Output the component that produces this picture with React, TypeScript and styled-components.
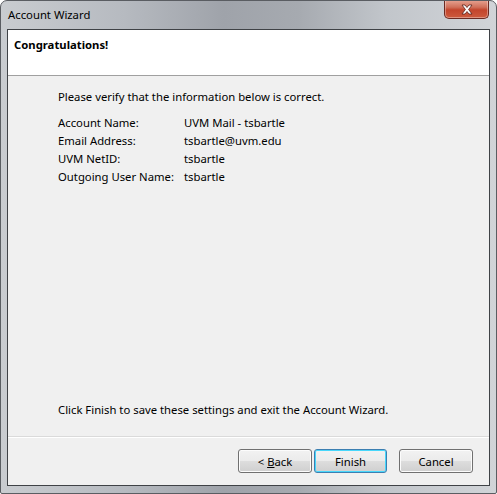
import React from 'react';
import styled, { createGlobalStyle } from 'styled-components';

const GlobalStyle = createGlobalStyle`
  html, body {
    margin: 0;
    padding: 0;
    background: #ffffff;
  }
  body {
    font-family: "Noto Sans", "DejaVu Sans", sans-serif;
  }
`;

const Window = styled.div`
  width: 497px;
  height: 494px;
  box-sizing: border-box;
  display: flex;
  flex-direction: column;
  border: 1px solid #5a5d62;
  border-radius: 7px 7px 2px 2px;
  background: linear-gradient(90deg, #c9ccd0 0%, #b6bac0 25%, #9fa3aa 45%, #a6aab0 60%, #c2c6cb 78%, #d1d4d8 100%);
  overflow: hidden;
`;

const TitleBar = styled.div`
  height: 28px;
  display: flex;
  justify-content: space-between;
  align-items: flex-start;
  padding-left: 7px;
`;

const Title = styled.span`
  font-size: 11.3px;
  color: #000;
  margin-top: 6px;
`;

const CloseButton = styled.div`
  width: 45px;
  height: 19px;
  margin-right: 7px;
  margin-top: -1px;
  box-sizing: border-box;
  border: 1px solid #6b2a22;
  border-top: none;
  border-radius: 0 0 5px 5px;
  background: linear-gradient(180deg, #e8a493 0%, #d0705a 40%, #c3452c 55%, #cd5a3d 100%);
  display: flex;
  align-items: center;
  justify-content: center;
  box-shadow: inset 0 0 0 1px rgba(255, 255, 255, 0.35);
`;

const Client = styled.div`
  flex: 1;
  margin: 0 6px 7px 6px;
  border: 1px solid #3f4246;
  background: #f0f0f0;
  display: flex;
  flex-direction: column;
`;

const Header = styled.div`
  height: 46px;
  background: #ffffff;
  border-bottom: 1px solid #a0a0a0;
  padding: 7px 0 0 6px;
  box-sizing: border-box;
  font-size: 11.3px;
  font-weight: bold;
  color: #000;
`;

const Body = styled.div`
  flex: 1;
  padding: 12px 0 0 50px;
  font-size: 11.3px;
  color: #000;
  display: flex;
  flex-direction: column;
`;

const Intro = styled.p`
  margin: 0 0 8px 0;
  line-height: 18px;
`;

const InfoGrid = styled.div`
  display: grid;
  grid-template-columns: 126px auto;
  grid-auto-rows: 18px;
  line-height: 18px;
`;

const Closing = styled.p`
  margin: auto 0 17px 0;
  line-height: 18px;
`;

const Footer = styled.div`
  height: 49px;
  border-top: 1px solid #dadada;
  box-shadow: inset 0 1px 0 #ffffff;
  display: flex;
  align-items: flex-start;
  padding: 12px 16px 0 0;
  box-sizing: border-box;
  justify-content: flex-end;
`;

const Button = styled.button<{ $default?: boolean; $gap?: number; $width?: number }>`
  width: ${p => p.$width ?? 74}px;
  height: 24px;
  margin-left: ${p => p.$gap ?? 0}px;
  font-family: inherit;
  font-size: 11.3px;
  color: #000;
  border-radius: 3px;
  border: 1px solid ${p => (p.$default ? '#3c7fb1' : '#707070')};
  background: linear-gradient(180deg, #f2f2f2 0%, #ebebeb 48%, #dddddd 52%, #cfcfcf 100%);
  box-shadow: inset 0 0 0 1px ${p => (p.$default ? '#48d7fb' : '#fcfcfc')};
  padding: 0;
  cursor: default;
  u {
    text-decoration: underline;
  }
`;

const CloseIcon = () => (
  <svg width="14" height="11" viewBox="0 0 14 11">
    <path
      d="M2 1 L5 1 L7 3.5 L9 1 L12 1 L8.6 5.5 L12 10 L9 10 L7 7.5 L5 10 L2 10 L5.4 5.5 Z"
      fill="#ffffff"
      stroke="#5a2018"
      strokeWidth="0.8"
      strokeLinejoin="round"
    />
  </svg>
);

const info: [string, string][] = [
  ['Account Name:', 'UVM Mail - tsbartle'],
  ['Email Address:', 'tsbartle@uvm.edu'],
  ['UVM NetID:', 'tsbartle'],
  ['Outgoing User Name:', 'tsbartle'],
];

export default function App() {
  return (
    <>
      <GlobalStyle />
      <Window>
        <TitleBar>
          <Title>Account Wizard</Title>
          <CloseButton>
            <CloseIcon />
          </CloseButton>
        </TitleBar>
        <Client>
          <Header>Congratulations!</Header>
          <Body>
            <Intro>Please verify that the information below is correct.</Intro>
            <InfoGrid>
              {info.map(([label, value]) => (
                <React.Fragment key={label}>
                  <span>{label}</span>
                  <span>{value}</span>
                </React.Fragment>
              ))}
            </InfoGrid>
            <Closing>Click Finish to save these settings and exit the Account Wizard.</Closing>
          </Body>
          <Footer>
            <Button>
              &lt; <u>B</u>ack
            </Button>
            <Button $default $gap={2} $width={73}>Finish</Button>
            <Button $gap={12}>Cancel</Button>
          </Footer>
        </Client>
      </Window>
    </>
  );
}
